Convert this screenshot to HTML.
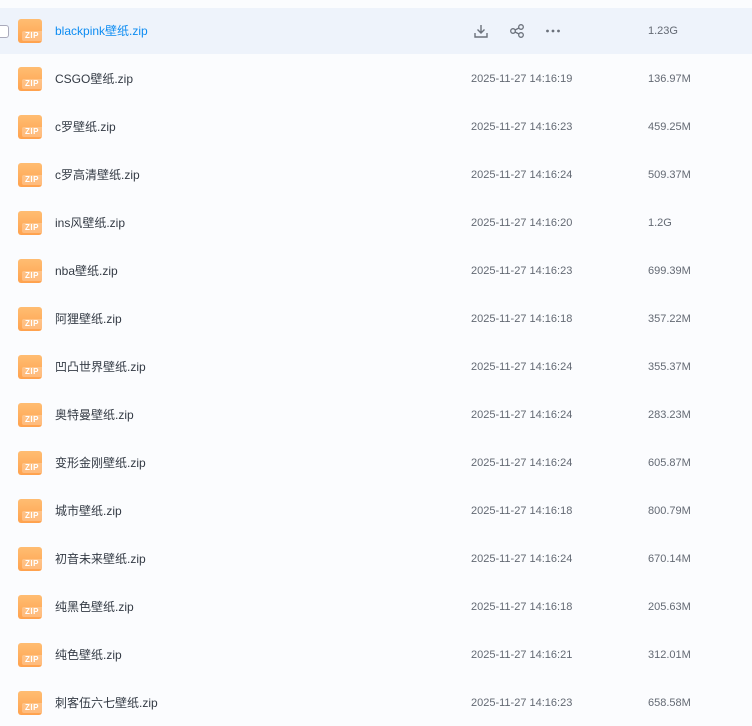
<!DOCTYPE html>
<html><head><meta charset="utf-8"><style>
body{margin:0;width:752px;height:721px;overflow:hidden;background:#fbfcfe;font-family:"Liberation Sans","Noto Sans CJK SC",sans-serif;}
.row{position:absolute;left:0;width:752px;height:46px;}
.row.h{background:#eef3fb;}
.ic{position:absolute;left:18px;top:11px;width:24px;height:24px;border-radius:3px;background:linear-gradient(180deg,#ffbd72,#ffa24e);overflow:hidden}
.ic span{position:absolute;left:4px;top:12px;width:20px;height:10px;background:rgba(255,255,255,.25);border-radius:2px 0 0 2px;color:#fff;font-size:8px;font-weight:bold;line-height:10px;text-align:center;letter-spacing:.5px}
.n{position:absolute;left:55px;top:14px;font-size:12px;color:#333a44;}
.d{position:absolute;left:471px;top:17px;font-size:11px;color:#636973;}
.s{position:absolute;left:648px;top:17px;font-size:11px;color:#636973;}
</style></head><body>
<div class="row h" style="top:8px">
<div style="position:absolute;left:-4px;top:17px;width:11px;height:11px;border:1px solid #aab;border-radius:3px;background:#fff"></div>
<div class="ic"><span>ZIP</span></div><div class="n" style="color:#0d8cf2">blackpink壁纸.zip</div>
<svg style="position:absolute;left:473px;top:15px" width="16" height="16" viewBox="0 0 16 16" fill="none" stroke="#6b717b" stroke-width="1.4"><path d="M8 2v8M4.5 6.5L8 10l3.5-3.5M2 10v4h12v-4"/></svg>
<svg style="position:absolute;left:509px;top:15px" width="16" height="16" viewBox="0 0 16 16" fill="none" stroke="#6b717b" stroke-width="1.3"><circle cx="4" cy="8" r="2.3"/><circle cx="12" cy="4" r="2.3"/><circle cx="12" cy="12" r="2.3"/><path d="M6 7l4-2M6 9l4 2"/></svg>
<svg style="position:absolute;left:545px;top:15px" width="16" height="16" viewBox="0 0 16 16" fill="#6b717b"><circle cx="2.5" cy="8" r="1.4"/><circle cx="8" cy="8" r="1.4"/><circle cx="13.5" cy="8" r="1.4"/></svg>
<div class="s">1.23G</div></div>
<div class="row" style="top:56px"><div class="ic"><span>ZIP</span></div><div class="n">CSGO壁纸.zip</div><div class="d">2025-11-27 14:16:19</div><div class="s">136.97M</div></div>
<div class="row" style="top:104px"><div class="ic"><span>ZIP</span></div><div class="n">c罗壁纸.zip</div><div class="d">2025-11-27 14:16:23</div><div class="s">459.25M</div></div>
<div class="row" style="top:152px"><div class="ic"><span>ZIP</span></div><div class="n">c罗高清壁纸.zip</div><div class="d">2025-11-27 14:16:24</div><div class="s">509.37M</div></div>
<div class="row" style="top:200px"><div class="ic"><span>ZIP</span></div><div class="n">ins风壁纸.zip</div><div class="d">2025-11-27 14:16:20</div><div class="s">1.2G</div></div>
<div class="row" style="top:248px"><div class="ic"><span>ZIP</span></div><div class="n">nba壁纸.zip</div><div class="d">2025-11-27 14:16:23</div><div class="s">699.39M</div></div>
<div class="row" style="top:296px"><div class="ic"><span>ZIP</span></div><div class="n">阿狸壁纸.zip</div><div class="d">2025-11-27 14:16:18</div><div class="s">357.22M</div></div>
<div class="row" style="top:344px"><div class="ic"><span>ZIP</span></div><div class="n">凹凸世界壁纸.zip</div><div class="d">2025-11-27 14:16:24</div><div class="s">355.37M</div></div>
<div class="row" style="top:392px"><div class="ic"><span>ZIP</span></div><div class="n">奥特曼壁纸.zip</div><div class="d">2025-11-27 14:16:24</div><div class="s">283.23M</div></div>
<div class="row" style="top:440px"><div class="ic"><span>ZIP</span></div><div class="n">变形金刚壁纸.zip</div><div class="d">2025-11-27 14:16:24</div><div class="s">605.87M</div></div>
<div class="row" style="top:488px"><div class="ic"><span>ZIP</span></div><div class="n">城市壁纸.zip</div><div class="d">2025-11-27 14:16:18</div><div class="s">800.79M</div></div>
<div class="row" style="top:536px"><div class="ic"><span>ZIP</span></div><div class="n">初音未来壁纸.zip</div><div class="d">2025-11-27 14:16:24</div><div class="s">670.14M</div></div>
<div class="row" style="top:584px"><div class="ic"><span>ZIP</span></div><div class="n">纯黑色壁纸.zip</div><div class="d">2025-11-27 14:16:18</div><div class="s">205.63M</div></div>
<div class="row" style="top:632px"><div class="ic"><span>ZIP</span></div><div class="n">纯色壁纸.zip</div><div class="d">2025-11-27 14:16:21</div><div class="s">312.01M</div></div>
<div class="row" style="top:680px"><div class="ic"><span>ZIP</span></div><div class="n">刺客伍六七壁纸.zip</div><div class="d">2025-11-27 14:16:23</div><div class="s">658.58M</div></div>
</body></html>
